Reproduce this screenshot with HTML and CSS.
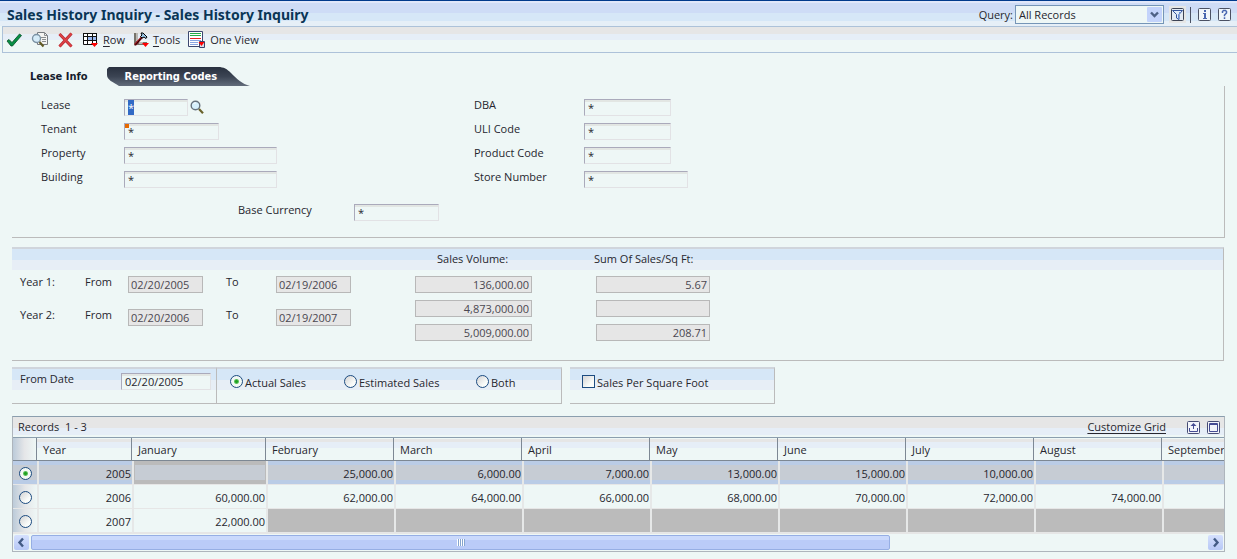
FILE: index.html
```html
<!DOCTYPE html>
<html lang="en">
<head>
<meta charset="utf-8">
<title>Sales History Inquiry</title>
<link rel="stylesheet" href="styles.css">
</head>
<body>
<header class="titlebar">
  <h1 class="title">Sales History Inquiry - Sales History Inquiry</h1>
  <label class="query-label" for="query">Query:</label>
  <span class="select-wrap">
    <select id="query" class="query"><option>All Records</option></select>
    <svg class="select-arrow" width="15" height="15" viewBox="0 0 15 15" aria-hidden="true"><rect width="15" height="15" rx="1" fill="#c3d3fb"/><path d="M4 5.5 7.5 9 11 5.5" fill="none" stroke="#4d6185" stroke-width="2.4"/></svg>
  </span>
  <button class="icon-btn filter" aria-label="Filter"><svg width="13" height="13" viewBox="0 0 13 13"><rect x=".5" y=".5" width="12" height="12" rx="1" fill="#e3eaf4" stroke="#3c4254"/><path d="M1.500 2.500h10L8 6.500V11.500L5.500 10V6.500z" fill="#dfeaf8" stroke="#33539c"/><path d="M7 6.500h1v4.500l-1-.6zM8 4h2L8 6z" fill="#6c91d8"/></svg></button>
  <span class="separator"></span>
  <button class="icon-btn info" aria-label="Info"><svg width="13" height="13" viewBox="0 0 13 13"><rect x=".5" y=".5" width="12" height="12" rx="1" fill="#f0f6fa" stroke="#4b5163"/><path d="M6 2h2v2H6zM5 5h3v5h1v1H5v-1h1V6H5z" fill="#4967b0"/></svg></button>
  <button class="icon-btn" aria-label="Help"><svg width="13" height="13" viewBox="0 0 13 13"><rect x=".5" y=".5" width="12" height="12" rx="1" fill="#f0f6fa" stroke="#4b5163"/><path d="M4.500 5V3.500l1-1h2l1 1V5L6.500 7v1.200M6.500 9.200V11" fill="none" stroke="#4967b0" stroke-width="1.500"/></svg></button>
</header>

<nav class="toolbar">
  <button class="tool ok" aria-label="OK"><svg width="16" height="16" viewBox="0 0 16 16"><path d="M1 9 3 7.500l3 3L13.500 2 15.500 3.500 6.500 14H5z" fill="#079045" stroke="#064d25" stroke-width=".8"/></svg></button>
  <button class="tool find" aria-label="Find"><svg width="18" height="17" viewBox="0 0 18 17"><path d="M6.500 1.500h7l3 3v9h-10z" fill="#f4f4f2" stroke="#777b80"/><path d="M13.500 1.500v3h3M10 6.500h5M11 8.500h4M11 10.500h4" fill="none" stroke="#8a8d90"/><circle cx="5.500" cy="7.500" r="4" fill="#d5ebf8" stroke="#7b91a3" stroke-width="1.300"/><path d="m8.500 11 4 4.500" stroke="#625b25" stroke-width="2.200"/></svg></button>
  <button class="tool cancel" aria-label="Cancel"><svg width="15" height="16" viewBox="0 0 15 16"><path d="m1.500 2 12 12.500M13.500 1.500 1.500 14.500" stroke="#b52a31" stroke-width="3"/><path d="m1.500 2 12 12.500M13.500 1.500 1.500 14.500" stroke="#df4246" stroke-width="1.600"/></svg></button>
  <button class="tool row"><svg width="16" height="16" viewBox="0 0 16 16"><path d="M.5 1.500h13v11H.5z" fill="#fff" stroke="#111"/><path d="M5 5h8v4H5z" fill="#9ab8f0"/><path d="M0 1.500h14M0 4.500h14M0 8.500h14M4.500 1v12M9.500 1v12" stroke="#111"/><path d="M8 11h7l-3.500 4z" fill="#f00"/></svg><span><u>R</u>ow</span></button>
  <button class="tool tools"><svg width="16" height="16" viewBox="0 0 16 16"><path d="M1 1h4v9h9v3H1z" fill="#77736b"/><path d="M3 2h2M3 4h2M3 6h2M3 8h2M7 10v2M9 10v2" stroke="#fff"/><path d="m2 13 8-9" stroke="#a40c13" stroke-width="2.400"/><path d="M8 1h2l4 4-1 1.500L11 5 9 6 7.500 4.500 9 3z" fill="#9dc9ea" stroke="#000"/><path d="M2 13.500 9 5.500" stroke="#111"/><path d="M9 11h7l-3.500 4z" fill="#f00"/></svg><span><u>T</u>ools</span></button>
  <button class="tool oneview"><svg width="18" height="18" viewBox="0 0 18 18"><path d="M.5.500h14v15H.500z" fill="#fff" stroke="#3d4870"/><path d="M2 2.500h11M2 4.500h11" stroke="#24ad47"/><path d="M2 7.500h11" stroke="#e62026"/><path d="M2 9.500h11M2 11.500h8M2 13.500h8" stroke="#88a6e1"/><path d="M11.500 10.500h5v6h-5z" fill="#d6dbe6" stroke="#38446c"/><path d="M10.500 11h6l-3 4z" fill="#f00"/></svg><span>One View</span></button>
</nav>

<main class="content">
  <div class="tabs">
    <button class="tab active">Lease Info</button>
    <button class="tab codes"><svg class="tab-shape" viewBox="0 0 143 19" aria-hidden="true"><defs><linearGradient id="tg" x1="0" y1="0" x2="0" y2="1"><stop offset="0" stop-color="#29313f"/><stop offset=".5" stop-color="#3b4453"/><stop offset="1" stop-color="#626c7b"/></linearGradient></defs><path d="M2 0h109c6 0 9 2 13 6 6 6 11 11 19 13H12C6 15 0 13 0 8V2z" fill="url(#tg)"/></svg><span>Reporting Codes</span></button>
  </div>

  <section class="panel form">
    <div class="columns">
      <div class="fields left">
        <div class="field"><label for="lease">Lease</label><input id="lease" class="w64" value="*"><button class="lookup" aria-label="Search lease"><svg width="14" height="14" viewBox="0 0 14 14"><circle cx="5.500" cy="5.500" r="4.300" fill="#d5effc" stroke="#65717d" stroke-width="1.400"/><path d="M3.500 4c.5-1 1.200-1.200 2.300-1" stroke="#fff" fill="none"/><path d="m9 9 4 4.200" stroke="#69622b" stroke-width="2.200"/></svg></button></div>
        <div class="field"><label for="tenant">Tenant</label><span class="marked"><input id="tenant" class="w95" value="*"></span></div>
        <div class="field"><label for="property">Property</label><input id="property" class="w153" value="*"></div>
        <div class="field"><label for="building">Building</label><input id="building" class="w153" value="*"></div>
      </div>
      <div class="fields right">
        <div class="field"><label for="dba">DBA</label><input id="dba" class="w87" value="*"></div>
        <div class="field"><label for="uli">ULI Code</label><input id="uli" class="w87" value="*"></div>
        <div class="field"><label for="product">Product Code</label><input id="product" class="w87" value="*"></div>
        <div class="field"><label for="store">Store Number</label><input id="store" class="w104" value="*"></div>
      </div>
    </div>
    <div class="field currency"><label for="currency">Base Currency</label><input id="currency" class="w85" value="*"></div>
  </section>

  <section class="panel summary">
    <div class="summary-head"><span>Sales Volume:</span><span>Sum Of Sales/Sq Ft:</span></div>
    <div class="summary-body">
      <div class="years">
        <div class="year"><span>Year 1:</span><label for="y1f">From</label><input id="y1f" readonly value="02/20/2005"><label class="to" for="y1t">To</label><input id="y1t" readonly value="02/19/2006"></div>
        <div class="year"><span>Year 2:</span><label for="y2f">From</label><input id="y2f" readonly value="02/20/2006"><label class="to" for="y2t">To</label><input id="y2t" readonly value="02/19/2007"></div>
      </div>
      <div class="totals">
        <input readonly aria-label="Sales volume, year 1" value="136,000.00"><input readonly aria-label="Sales per square foot, year 1" value="5.67">
        <input readonly aria-label="Sales volume, year 2" value="4,873,000.00"><input readonly aria-label="Sales per square foot, year 2" value="">
        <input readonly aria-label="Sales volume, total" value="5,009,000.00"><input readonly aria-label="Sales per square foot, total" value="208.71">
      </div>
    </div>
  </section>

  <div class="options">
    <div class="panel option date"><label for="fromdate">From Date</label><input id="fromdate" value="02/20/2005"></div>
    <div class="panel option kinds">
      <label><input type="radio" name="kind" checked>Actual Sales</label>
      <label><input type="radio" name="kind">Estimated Sales</label>
      <label><input type="radio" name="kind">Both</label>
    </div>
    <div class="panel option foot"><label><input type="checkbox">Sales Per Square Foot</label></div>
  </div>

  <section class="grid">
    <div class="grid-bar">
      <span class="records">Records&nbsp; 1 - 3</span>
      <a href="#" class="customize">Customize Grid</a>
      <button class="icon-btn" aria-label="Export"><svg width="13" height="13" viewBox="0 0 13 13"><rect x=".5" y=".5" width="12" height="12" rx="1" fill="#f3f5fb" stroke="#464c74"/><path d="M6.500 8V3M2.500 7v3.500h8V7" fill="none" stroke="#464c94"/><path d="M3.500 5 6.500 2l3 3z" fill="#464c94"/></svg></button>
      <button class="icon-btn" aria-label="Maximize"><svg width="13" height="13" viewBox="0 0 13 13"><rect x=".5" y=".5" width="12" height="12" rx="1" fill="#f3f5fb" stroke="#464c74"/><path d="M2.500 2.500h8v8h-8zM2.500 3.500h8" fill="none" stroke="#464c94"/></svg></button>
    </div>
    <div class="table-wrap">
      <table>
        <colgroup><col class="c-pick"><col class="c-year"><col class="c-jan"><col span="8" class="c-month"></colgroup>
        <thead><tr><th aria-label="Select"></th><th>Year</th><th>January</th><th>February</th><th>March</th><th>April</th><th>May</th><th>June</th><th>July</th><th>August</th><th>September</th></tr></thead>
        <tbody>
          <tr class="selected"><td class="pick"><input type="radio" name="row" aria-label="2005" checked></td><td>2005</td><td class="inset"></td><td>25,000.00</td><td>6,000.00</td><td>7,000.00</td><td>13,000.00</td><td>15,000.00</td><td>10,000.00</td><td></td><td></td></tr>
          <tr><td class="pick"><input type="radio" name="row" aria-label="2006"></td><td>2006</td><td>60,000.00</td><td>62,000.00</td><td>64,000.00</td><td>66,000.00</td><td>68,000.00</td><td>70,000.00</td><td>72,000.00</td><td>74,000.00</td><td></td></tr>
          <tr><td class="pick"><input type="radio" name="row" aria-label="2007"></td><td>2007</td><td>22,000.00</td><td class="off"></td><td class="off"></td><td class="off"></td><td class="off"></td><td class="off"></td><td class="off"></td><td class="off"></td><td class="off"></td></tr>
        </tbody>
      </table>
    </div>
    <div class="scrollbar">
      <button class="arrow" aria-label="Scroll left"><svg width="15" height="15" viewBox="0 0 15 15"><path d="M9 3.500 5.500 7.500 9 11.500" fill="none" stroke="#435b85" stroke-width="2.400"/></svg></button>
      <div class="track"><div class="thumb"><i></i><i></i><i></i><i></i></div></div>
      <button class="arrow" aria-label="Scroll right"><svg width="15" height="15" viewBox="0 0 15 15"><path d="M6 3.500 9.500 7.500 6 11.500" fill="none" stroke="#435b85" stroke-width="2.400"/></svg></button>
    </div>
  </section>
</main>
<script src="main.js"></script>
</body>
</html>
```
FILE: styles.css
```css
* { box-sizing: border-box; }
body {
  margin: 0;
  background: #eef7f6;
  color: #26262e;
  font: 11px/14px "Open Sans", sans-serif;
}
button, input, select { font: inherit; color: inherit; margin: 0; }
button { border: 0; background: none; padding: 0; }
svg { display: block; }

.titlebar {
  display: flex;
  align-items: center;
  height: 26px;
  padding: 2px 6px 0 7px;
  border-top: 1px solid #003a8c;
  background: linear-gradient(#e0e7fa 2px, #cedcf6 2px 12px, #d6e7f7 12px 20px, #e6eff7 20px);
}
.title {
  flex: 1;
  margin: 0;
  color: #0a3556;
  font: bold 14px/20px "Noto Sans", sans-serif;
}
.query-label { margin-right: 2px; }
.select-wrap { position: relative; margin-right: 5px; }
.query {
  display: block;
  appearance: none;
  width: 149px;
  height: 19px;
  padding: 0 3px;
  border: 1px solid #7595b7;
  border-radius: 0;
  background: #eef7f6;
}
.select-arrow { position: absolute; right: 2px; top: 2px; pointer-events: none; }
.filter { padding: 2px; background: #e6e6e6; }
.separator { width: 1px; height: 16px; margin: 0 7px 0 4px; background: #4b5163; }
.info { margin-right: 7px; }

.toolbar {
  display: flex;
  align-items: center;
  height: 27px;
  margin-left: 2px;
  padding-left: 3px;
  border: 1px solid #adc2d9;
  border-right: 0;
  background: linear-gradient(#e6e6e6 7px, #e6eef7 7px 13px, #eef7f6 13px);
}
.tool { display: flex; align-items: center; gap: 4px; }
.ok { margin-right: 9px; }
.find { margin-right: 9px; }
.cancel { margin-right: 10px; }
.row, .tools { margin-right: 8px; }
u { text-underline-offset: 2px; }

.content { padding: 14px 12px 0; }
.tabs { display: flex; height: 19px; padding-left: 18px; gap: 19px; }
.tab { font: bold 11px/19px "DejaVu Sans Condensed", sans-serif; color: #141c2c; }
.codes { position: relative; width: 143px; padding-left: 18px; text-align: left; color: #fff; }
.codes span { position: relative; }
.tab-shape { position: absolute; inset: 0; width: 100%; height: 100%; }

.panel { border: 0 solid #bbb; border-bottom-width: 1px; border-right-width: 1px; }
.form { padding: 12px 0 16px 29px; }
.columns { display: grid; grid-template-columns: 433px 1fr; }
.fields { display: grid; gap: 6px; }
.field { display: flex; align-items: flex-start; height: 18px; }
.field label { width: 83px; }
.right label { width: 110px; }
.currency { margin-top: 15px; padding-left: 197px; }
.currency label { width: 116px; }
input {
  height: 17px;
  margin-top: 1px;
  padding: 0 3px;
  border: 1px solid #e2e2e5;
  border-top-color: #aab;
  border-left-color: #aab;
  border-radius: 0;
  background: linear-gradient(#e2e6e3 2px, #eef7f6 2px);
  outline: 0;
}
input::selection { background: #316ac5; color: #fff; }
.w64 { width: 64px; }
.w85 { width: 85px; }
.w87 { width: 87px; }
.w95 { width: 95px; }
.w104 { width: 104px; }
.w153 { width: 153px; }
.lookup { margin: 2px 0 0 2px; }
.marked { position: relative; display: flex; }
.marked::before { content: ""; position: absolute; left: 1px; top: 2px; width: 4px; height: 4px; background: #e66a00; }

.summary {
  margin: 9px 1px 0 0;
  padding-bottom: 19px;
  border-top: 2px solid #d0d5dc;
}
.summary-head {
  display: flex;
  height: 21px;
  padding: 3px 0 0 425px;
  background: linear-gradient(#d6e7f7 11px, #e7eef6 11px);
}
.summary-head span:first-child { width: 157px; }
.summary-body { display: flex; padding: 5px 0 0 8px; }
.years { display: grid; align-content: start; gap: 15px; width: 395px; }
.year { display: flex; align-items: flex-start; height: 18px; }
.year span { width: 65px; }
.year label { width: 43px; }
.year .to { width: 50px; }
.year input { width: 75px; }
.year input:first-of-type { margin-right: 23px; }
input[readonly] { padding: 0 2px; border-color: #b8b8b8; background: #e6e6e6; color: #4a4650; }
.totals { display: grid; grid-template-columns: 117px 114px; column-gap: 64px; row-gap: 6px; }
.totals input { width: 100%; text-align: right; }

.options { display: flex; margin-top: 6px; }
.option {
  display: flex;
  height: 37px;
  border-top: 2px solid #d0d5dc;
  background: linear-gradient(#d6e7f7 11px, #e7eef6 11px 21px, #eef7f6 21px);
}
.date { width: 205px; padding: 3px 5px 0 8px; }
.date label { flex: 1; }
.date input { width: 90px; }
.kinds { width: 345px; padding: 6px 0 0 13px; }
.kinds label:nth-child(1) { width: 114px; }
.kinds label:nth-child(2) { width: 132px; }
.foot { width: 205px; margin-left: 8px; padding: 6px 0 0 12px; }
.kinds label, .foot label { display: flex; gap: 2px; line-height: 16px; }
input[type="radio"], input[type="checkbox"] {
  appearance: none;
  flex: none;
  width: 13px;
  height: 13px;
  margin: 0;
  padding: 0;
  border: 1px solid #1c4b80;
  background: linear-gradient(135deg, #dedede 20%, #fafcfa 70%);
}
input[type="radio"] { border-radius: 50%; }
input[type="radio"]:checked { background: radial-gradient(circle, #21a121 0 1px, #5cc05c 2px, #f2f8f4 3px); }

.grid { margin-top: 12px; border: 1px solid #aeb5bc; border-top-color: #8b9eae; }
.grid-bar {
  display: flex;
  align-items: center;
  height: 20px;
  padding: 0 4px 0 5px;
  gap: 7px;
  background: linear-gradient(#e6e6e6 11px, #e6eef7 11px 18px, #eef7f6 18px);
}
.records { flex: 1; }
.customize { margin-right: 14px; color: inherit; text-underline-offset: 2px; }
.table-wrap { overflow: hidden; border-top: 1px solid #8b9eae; }
table { table-layout: fixed; width: 1277px; border-collapse: separate; border-spacing: 0; }
.c-pick { width: 24px; }
.c-year { width: 95px; }
.c-jan { width: 134px; }
.c-month { width: 128px; }
th {
  height: 23px;
  padding: 2px 6px 0;
  border-right: 1px solid #7d8894;
  border-bottom: 1px solid #7d8894;
  background: linear-gradient(#eef7f6 1px, #e6e6e6 1px 4px, #e6eef7 4px 10px, #eef7f6 10px);
  text-align: left;
  font-weight: normal;
}
th:first-child, .pick { background: linear-gradient(90deg, #bccbd9, #e5e6e8 50%, #eef7f6); }
td {
  height: 24px;
  padding: 2px 1px 0 0;
  border-left: 2px solid #e6e8e8;
  border-bottom: 1px solid #e6e6e6;
  text-align: right;
}
td.pick { padding: 2px 0 0 6px; border-left: 0; }
.pick input { display: block; }
.selected td { background: linear-gradient(#bacce6 4px, #c6ccd4 4px 19px, #bacce6 19px); }
.selected td.inset { background: linear-gradient(#c6ccd4, #c6ccd4) 1px 4px / calc(100% - 2px) 15px no-repeat #bbb; }
.off { background: #bbb; }

.scrollbar { display: flex; height: 18px; padding: 2px 1px 0; background: linear-gradient(#e6e6e6 1px, #eef7f6 1px); }
.arrow { width: 15px; height: 15px; background: linear-gradient(#d5e0fd, #b7c8f6); border-radius: 2px; }
.track { flex: 1; padding-left: 2px; }
.thumb {
  display: flex;
  align-items: center;
  justify-content: center;
  gap: 1px;
  width: 73%;
  height: 15px;
  border: 1px solid #96aee4;
  border-radius: 2px;
  background: linear-gradient(#cad9fc 4px, #bacbf8 4px);
}
.thumb i { width: 1px; height: 7px; background: #fff; box-shadow: 1px 0 #86a5cf; }
```
FILE: main.js
```js
const lease = document.getElementById("lease");
lease.focus();
lease.select();
```
